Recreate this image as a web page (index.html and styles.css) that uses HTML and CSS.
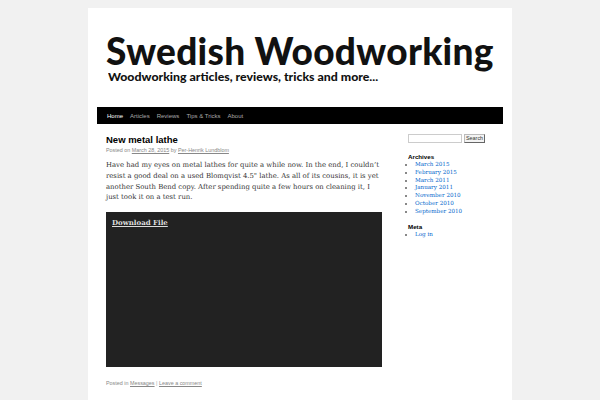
FILE: index.html
```html
<!DOCTYPE html>
<html>
<head>
<meta charset="utf-8">
<link rel="stylesheet" href="styles.css">
</head>
<body>
<div class="wrapper">
  <header class="header">
    <div class="site-title">Swedish Woodworking</div>
    <div class="site-desc"><span class="desc-text">Woodworking articles, reviews, tricks and more...</span></div>
  </header>
  <nav class="access">
    <a class="current" href="#">Home</a>
    <a href="#">Articles</a>
    <a href="#">Reviews</a>
    <a href="#">Tips &amp; Tricks</a>
    <a href="#">About</a>
  </nav>
  <div class="main">
    <div class="content">
      <h2 class="entry-title">New metal lathe</h2>
      <div class="entry-meta">Posted on <a href="#">March 28, 2015</a> by <a href="#">Per-Henrik Lundblom</a></div>
      <p class="entry-text">Have had my eyes on metal lathes for quite a while now. In the end, I couldn’t resist a good deal on a used Blomqvist 4.5" lathe. As all of its cousins, it is yet another South Bend copy. After spending quite a few hours on cleaning it, I just took it on a test run.</p>
      <div class="video"><a href="#">Download File</a></div>
      <div class="entry-utility">Posted in <a href="#">Messages</a> <span class="sep">|</span> <a href="#">Leave a comment</a></div>
    </div>
    <aside class="sidebar">
      <form class="search"><input class="search-input" type="text"><button class="search-btn" type="button">Search</button></form>
      <h3 class="widget-title">Archives</h3>
      <ul class="widget-list">
        <li><a href="#">March 2015</a></li>
        <li><a href="#">February 2015</a></li>
        <li><a href="#">March 2011</a></li>
        <li><a href="#">January 2011</a></li>
        <li><a href="#">November 2010</a></li>
        <li><a href="#">October 2010</a></li>
        <li><a href="#">September 2010</a></li>
      </ul>
      <h3 class="widget-title">Meta</h3>
      <ul class="widget-list">
        <li><a href="#">Log in</a></li>
      </ul>
    </aside>
  </div>
</div>
</body>
</html>
```
FILE: styles.css
```css
html, body { margin: 0; padding: 0; }
body {
  background: #f1f1f1;
  padding-top: 8px;
  font-family: "Liberation Sans", Arial, sans-serif;
}
.wrapper {
  width: 406px;
  margin: 0 auto;
  background: #fff;
  padding: 0 9px;
  min-height: 392px;
}
.header {
  padding-top: 26px;
  height: 99px;
  box-sizing: border-box;
}
.site-title {
  font-family: Lato, sans-serif;
  font-weight: 900;
  font-size: 37px;
  line-height: 34px;
  letter-spacing: 0.3px;
  color: #111;
  margin-left: 9px;
  white-space: nowrap;
}
.site-desc {
  font-family: Lato, sans-serif;
  font-weight: 900;
  font-size: 11px;
  line-height: 11px;
  color: #111;
  margin-left: 11px;
  margin-top: 3px;
  white-space: nowrap;
}
.desc-text {
  display: inline-block;
  transform: scaleX(1.12);
  transform-origin: left center;
}
.access {
  display: flex;
  background: #000;
  height: 17px;
  align-items: center;
  padding-left: 6.5px;
}
.access a {
  font-size: 6px;
  color: #aaa;
  text-decoration: none;
  padding: 0 3.5px;
}
.access a.current { color: #fff; }
.main {
  display: flex;
  padding-top: 9px;
}
.content {
  width: 276px;
  margin-left: 9px;
}
.entry-title {
  margin: 0;
  font-size: 9.5px;
  line-height: 13px;
  font-weight: bold;
  color: #000;
}
.entry-meta {
  font-size: 5.4px;
  line-height: 8px;
  color: #888;
}
.entry-meta a, .entry-utility a { color: #888; }
.entry-text {
  font-family: "DejaVu Serif", Georgia, serif;
  font-size: 6.9px;
  line-height: 10.8px;
  color: #333;
  margin: 6px 0 9px;
}
.video {
  background: #222;
  height: 155px;
  padding: 7px 6px;
  box-sizing: border-box;
  font-size: 7px;
  line-height: 8px;
}
.video a {
  font-family: "DejaVu Serif", Georgia, serif;
  font-weight: bold;
  font-size: 7px;
  color: #ddd;
}
.entry-utility {
  margin-top: 12px;
  font-size: 5.4px;
  line-height: 8px;
  color: #888;
}
.entry-utility .sep { color: #aaa; }
.sidebar {
  margin-left: 26px;
  width: 95px;
  padding-top: 1px;
}
.search {
  display: flex;
  align-items: center;
  margin: 0 0 10px;
}
.search-input {
  width: 54px;
  height: 9px;
  box-sizing: border-box;
  border: 1px solid #ccc;
  padding: 0;
  margin: 0 2px 0 0;
  background: #fff;
}
.search-btn {
  font-family: "Liberation Sans", Arial, sans-serif;
  font-size: 5.4px;
  height: 9px;
  padding: 0 1px;
  margin: 0;
  border: 1px solid #bbb;
  border-right-color: #666;
  border-bottom-color: #666;
  background: #f3f3f3;
  color: #333;
  line-height: 7px;
}
.widget-title {
  margin: 0;
  font-size: 6.2px;
  line-height: 8px;
  font-weight: bold;
  color: #000;
}
.widget-list {
  margin: 0 0 7px;
  padding: 0 0 0 7px;
  list-style: square;
  font-family: "DejaVu Serif", Georgia, serif;
  font-size: 5.6px;
  line-height: 7.8px;
  color: #888;
}
.widget-list a { color: #0066cc; text-decoration: none; }
```
